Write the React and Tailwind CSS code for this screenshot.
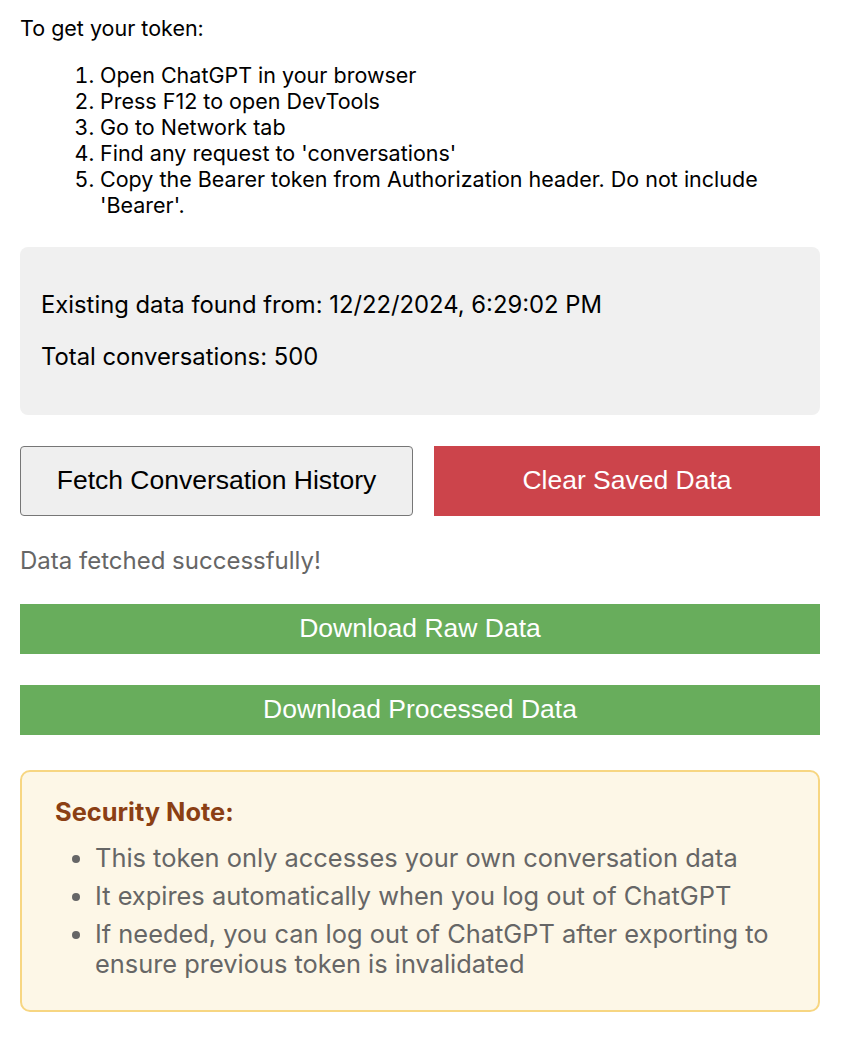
import React from "react";

export default function App() {
  const steps = [
    "Open ChatGPT in your browser",
    "Press F12 to open DevTools",
    "Go to Network tab",
    "Find any request to 'conversations'",
    "Copy the Bearer token from Authorization header. Do not include 'Bearer'.",
  ];
  const notes = [
    "This token only accesses your own conversation data",
    "It expires automatically when you log out of ChatGPT",
    "If needed, you can log out of ChatGPT after exporting to ensure previous token is invalidated",
  ];
  return (
    <div className="bg-white min-h-[1046px] font-['Inter',sans-serif] text-black">
      <div className="w-[800px] mx-[20px] pt-[15px]">
        <p className="text-[21.5px] leading-[26px]">To get your token:</p>
        <ol className="list-decimal pl-[80px] mt-[21px] text-[21.5px] leading-[26px]">
          {steps.map((s) => (
            <li key={s}>{s}</li>
          ))}
        </ol>
        <div className="mt-[29px] bg-[#f0f0f0] rounded-[8px] px-[21px] pt-[44px] pb-[44px] flex flex-col gap-[24px] text-[23.8px] leading-[28px]">
          <p>Existing data found from: 12/22/2024, 6:29:02 PM</p>
          <p>Total conversations: 500</p>
        </div>
        <div className="mt-[31px] flex gap-[21px] font-['Liberation_Sans',Arial,sans-serif] text-[26.5px]">
          <button className="w-[393px] h-[70px] bg-[#efefef] border border-[#767676] rounded-[4px] text-black">
            Fetch Conversation History
          </button>
          <button className="flex-1 h-[70px] bg-[#cc444b] text-white">
            Clear Saved Data
          </button>
        </div>
        <p className="mt-[31px] text-[24px] leading-[28px] text-[#666666]">Data fetched successfully!</p>
        <button className="mt-[29px] w-full h-[50px] block bg-[#68ad5c] text-white text-[26.5px] font-['Liberation_Sans',Arial,sans-serif]">
          Download Raw Data
        </button>
        <button className="mt-[31px] w-full h-[50px] block bg-[#68ad5c] text-white text-[26.5px] font-['Liberation_Sans',Arial,sans-serif]">
          Download Processed Data
        </button>
        <div className="mt-[35px] bg-[#fdf7e7] border-2 border-[#f7d682] rounded-[10px] pl-[33px] pr-[20px] pt-[25px] pb-[31px]">
          <p className="text-[25.4px] leading-[30px] font-bold text-[#8b3f14]">Security Note:</p>
          <ul className="list-disc pl-[40px] mt-[16px] text-[25.4px] leading-[30px] text-[#666666] flex flex-col gap-[8px]">
            {notes.map((n) => (
              <li key={n}>{n}</li>
            ))}
          </ul>
        </div>
      </div>
    </div>
  );
}
